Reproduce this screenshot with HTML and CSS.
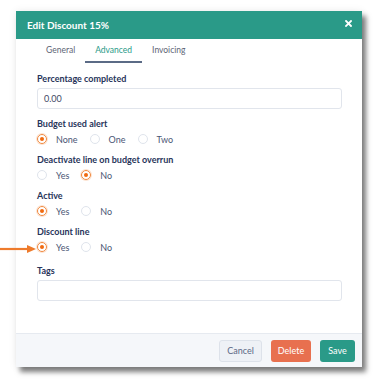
FILE: index.html
```html
<!DOCTYPE html>
<html>
<head>
<meta charset="utf-8">
<link rel="stylesheet" href="styles.css">
</head>
<body>
<div class="page">
  <div class="dialog">
    <div class="header">
      <span class="title">Edit Discount 15%</span>
      <svg class="close" width="7" height="7" viewBox="0 0 7 7"><path d="M1 1L6 6M6 1L1 6" stroke="#fff" stroke-width="1.8" stroke-linecap="square"/></svg>
    </div>
    <div class="tabs">
      <div class="tab">General</div>
      <div class="tab active">Advanced</div>
      <div class="tab">Invoicing</div>
    </div>
    <div class="body">
      <div class="field">
        <div class="label">Percentage completed</div>
        <div class="input">0.00</div>
      </div>
      <div class="field">
        <div class="label">Budget used alert</div>
        <div class="radios">
          <span class="opt"><span class="radio on"></span>None</span>
          <span class="opt"><span class="radio"></span>One</span>
          <span class="opt"><span class="radio"></span>Two</span>
        </div>
      </div>
      <div class="field">
        <div class="label">Deactivate line on budget overrun</div>
        <div class="radios">
          <span class="opt"><span class="radio"></span>Yes</span>
          <span class="opt"><span class="radio on"></span>No</span>
        </div>
      </div>
      <div class="field">
        <div class="label">Active</div>
        <div class="radios">
          <span class="opt"><span class="radio on"></span>Yes</span>
          <span class="opt"><span class="radio"></span>No</span>
        </div>
      </div>
      <div class="field">
        <div class="label">Discount line</div>
        <div class="radios">
          <span class="opt"><span class="radio on"></span>Yes</span>
          <span class="opt"><span class="radio"></span>No</span>
        </div>
      </div>
      <div class="field tags">
        <div class="label">Tags</div>
        <div class="input"></div>
      </div>
    </div>
    <div class="footer">
      <button class="btn cancel">Cancel</button>
      <button class="btn delete">Delete</button>
      <button class="btn save">Save</button>
    </div>
  </div>
  <svg class="arrow" width="37" height="10" viewBox="0 0 37 10"><path d="M0 5H29" stroke="#ee7b2c" stroke-width="2.2"/><path d="M27 1L36 5L27 9Z" fill="#ee7b2c"/></svg>
</div>
</body>
</html>
```
FILE: styles.css
```css
html, body {
  margin: 0;
  padding: 0;
  background: #fff;
  font-family: Lato, "Liberation Sans", sans-serif;
}
.page {
  position: relative;
  width: 384px;
  height: 390px;
  padding: 11px 0 0 16px;
  box-sizing: border-box;
}
.dialog {
  width: 346px;
  height: 356px;
  background: #fff;
  display: flex;
  flex-direction: column;
  box-shadow: 4px 5px 5px rgba(0,0,0,0.5), 0 0 8px rgba(0,0,0,0.08);
}
.header {
  height: 28px;
  background: #2a9a88;
  display: flex;
  align-items: center;
  justify-content: space-between;
  padding: 0 10px 0 11px;
}
.title {
  color: #fff;
  font-weight: 700;
  font-size: 10px;
}
.close { display: block; margin-top: -4px; }
.tabs {
  display: flex;
  height: 24px;
  padding-left: 20px;
}
.tab {
  padding: 0 10px;
  font-size: 8.5px;
  color: #5d6475;
  display: flex;
  align-items: center;
  border-bottom: 2px solid transparent;
  box-sizing: border-box;
}
.tab.active {
  color: #2a9a88;
  border-bottom-color: #5b6b86;
}
.body {
  flex: 1;
  padding: 10px 20px 0 21px;
  display: flex;
  flex-direction: column;
  gap: 9px;
}
.field { display: flex; flex-direction: column; }
.field.tags { margin-top: 3px; }
.label {
  font-size: 9px;
  font-weight: 700;
  color: #27345a;
  line-height: 12px;
  margin-bottom: 3px;
}
.input {
  height: 21px;
  border: 1px solid #e1e5ec;
  border-radius: 3px;
  box-sizing: border-box;
  font-size: 9px;
  color: #3f4a66;
  padding-left: 6px;
  display: flex;
  align-items: center;
}
.radios {
  display: flex;
  height: 12px;
  align-items: center;
  gap: 12px;
  margin-top: 0;
}
.opt {
  display: flex;
  align-items: center;
  gap: 9px;
  font-size: 9px;
  color: #4a5674;
}
.radio {
  width: 10px;
  height: 10px;
  border-radius: 50%;
  border: 1px solid #dfe4ec;
  box-sizing: border-box;
  position: relative;
}
.radio.on {
  border-color: #f0883e;
  box-shadow: 0 0 0 1px #fde4d2;
}
.radio.on::after {
  content: "";
  position: absolute;
  left: 2px;
  top: 2px;
  width: 4px;
  height: 4px;
  border-radius: 50%;
  background: #f06a10;
}
.footer {
  height: 34px;
  border-top: 1px solid #e6eaf0;
  background: #f5f7fa;
  box-sizing: border-box;
  display: flex;
  align-items: center;
  justify-content: flex-end;
  gap: 9px;
  padding: 0 7px 0 0;
}
.btn {
  height: 22px;
  border-radius: 3px;
  font-family: inherit;
  font-size: 9px;
  padding: 0;
  border: 1px solid transparent;
  color: #fff;
}
.cancel { width: 43px; background: #eef1f6; border-color: #dde2ea; color: #5b6784; }
.delete { width: 40px; background: #e8704f; }
.save { width: 35px; background: #2a9a88; }
.arrow {
  position: absolute;
  left: 0;
  top: 244px;
}
```
